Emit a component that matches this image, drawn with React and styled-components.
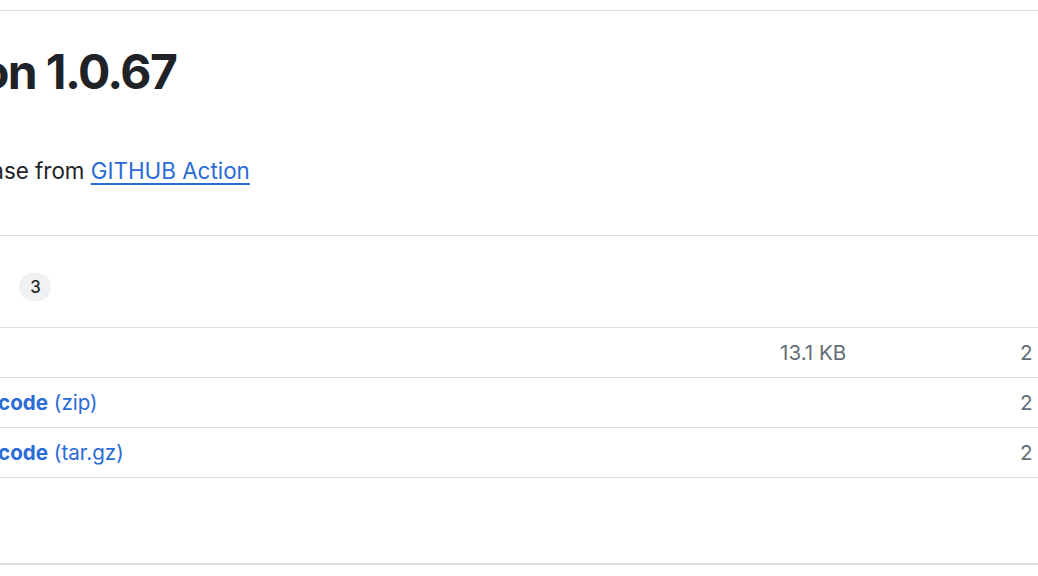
import React from 'react';
import styled, { createGlobalStyle } from 'styled-components';

const GlobalStyle = createGlobalStyle`
  html, body {
    margin: 0;
    padding: 0;
    background: #ffffff;
  }
  body {
    font-family: Inter, "Liberation Sans", Arial, sans-serif;
    color: #1f2328;
    -webkit-font-smoothing: antialiased;
  }
`;

const Page = styled.div`
  width: 100%;
  height: 576px;
  overflow: hidden;
  background: #ffffff;
`;

const TopGap = styled.div`
  height: 10px;
  border-bottom: 1px solid #d8dee4;
`;

const Card = styled.section`
  margin: 0 -122px 0 -101px;
  border-bottom: 2px solid #d8dee4;
`;

const Header = styled.header`
  padding-top: 31px;
`;

const Title = styled.h1`
  margin: 0 0 0 -32px;
  font-size: 48px;
  line-height: 60px;
  font-weight: 700;
  letter-spacing: -1.6px;
  white-space: nowrap;
`;

const Body = styled.p`
  margin: 52px 0 0 -3px;
  font-size: 22.4px;
  line-height: 33.6px;
  white-space: nowrap;
`;

const Link = styled.a`
  color: #2b6bd6;
  text-decoration: underline;
  text-underline-offset: 4px;
  text-decoration-thickness: 1.5px;
`;

const Assets = styled.div`
  margin-top: 47px;
  border-top: 1px solid #d8dee4;
`;

const AssetsHeader = styled.div`
  display: flex;
  align-items: center;
  padding: 37px 0 26px;
  border-bottom: 1px solid #d8dee4;
`;

const AssetsTitle = styled.span`
  display: inline-flex;
  align-items: center;
  gap: 6px;
  margin: 0 28px 0 -11px;
  font-size: 22.4px;
  font-weight: 700;
`;

const Counter = styled.span`
  display: inline-flex;
  align-items: center;
  justify-content: center;
  min-width: 32px;
  height: 28px;
  border-radius: 14px;
  background: #eff1f3;
  font-size: 16.8px;
  font-weight: 500;
  color: #1f2328;
`;

const Row = styled.div`
  display: grid;
  grid-template-columns: 1fr 240px 140px;
  align-items: center;
  height: 49px;
  border-bottom: 1px solid #d8dee4;
  font-size: 20.6px;
  white-space: nowrap;
`;

const Name = styled.a`
  display: flex;
  align-items: center;
  gap: 11px;
  margin-left: -10px;
  color: #2b6bd6;
  text-decoration: none;
  b {
    font-weight: 700;
  }
`;

const Muted = styled.span`
  color: #656d76;
`;

const Footer = styled.div`
  height: 85px;
`;

const Triangle = () => (
  <svg width="22" height="22" viewBox="0 0 16 16" fill="#59636e">
    <path d="m4.427 7.427 3.396 3.396a.25.25 0 0 0 .354 0l3.396-3.396A.25.25 0 0 0 11.396 7H4.604a.25.25 0 0 0-.177.427Z" />
  </svg>
);

const ZipIcon = () => (
  <svg width="22" height="22" viewBox="0 0 16 16" fill="#59636e">
    <path d="M3.5 1.75v11.5c0 .09.048.173.126.217a.75.75 0 0 1-.752 1.298A1.748 1.748 0 0 1 2 13.25V1.75C2 .784 2.784 0 3.750 0h5.586c.464 0 .909.185 1.237.513l2.914 2.914c.329.328.513.773.513 1.237v8.586A1.75 1.75 0 0 1 12.25 15h-.5a.75.75 0 0 1 0-1.5h.5a.25.25 0 0 0 .25-.25V4.664a.25.25 0 0 0-.073-.177L9.513 1.573a.25.25 0 0 0-.177-.073H7.25a.75.75 0 0 1 0 1.5h-.5a.75.75 0 0 1 0-1.5h-3a.25.25 0 0 0-.25.25Zm3.75 8.75h.5c.966 0 1.75.784 1.75 1.750v3a.75.75 0 0 1-.75.75h-2.5a.75.75 0 0 1-.75-.75v-3c0-.966.784-1.75 1.75-1.75ZM6 5.25a.75.75 0 0 1 .75-.75h.5a.75.75 0 0 1 0 1.5h-.5A.75.75 0 0 1 6 5.25Zm.75 2.25h.5a.75.75 0 0 1 0 1.5h-.5a.75.75 0 0 1 0-1.5ZM8 6.75A.75.75 0 0 1 8.75 6h.5a.75.75 0 0 1 0 1.5h-.5A.75.75 0 0 1 8 6.75ZM8.75 3h.5a.75.75 0 0 1 0 1.5h-.5a.75.75 0 0 1 0-1.5ZM8 9.75A.75.75 0 0 1 8.75 9h.5a.75.75 0 0 1 0 1.5h-.5A.75.75 0 0 1 8 9.75Zm-1 2.5v2.25h1v-2.25a.25.25 0 0 0-.25-.25h-.5a.25.25 0 0 0-.25.25Z" />
  </svg>
);

const assets = [
  { name: 'bin.zip', size: '13.1 KB', date: '2 days ago' },
  { name: 'Source code', ext: '(zip)', date: '2 days ago' },
  { name: 'Source code', ext: '(tar.gz)', date: '2 days ago' },
];

export default function App() {
  return (
    <Page>
      <GlobalStyle />
      <TopGap />
      <Card>
        <Header>
          <Title>Version 1.0.67</Title>
        </Header>
        <Body>
          Auto release from <Link href="#">GITHUB Action</Link>
        </Body>
        <Assets>
          <AssetsHeader>
            <AssetsTitle>
              <Triangle />
              Assets
            </AssetsTitle>
            <Counter>3</Counter>
          </AssetsHeader>
          {assets.map((a, i) => (
            <Row key={i}>
              <Name href="#">
                <ZipIcon />
                <span>
                  <b>{a.name}</b>
                  {a.ext ? ` ${a.ext}` : ''}
                </span>
              </Name>
              <Muted>{a.size || ''}</Muted>
              <Muted>{a.date}</Muted>
            </Row>
          ))}
        </Assets>
        <Footer />
      </Card>
    </Page>
  );
}
